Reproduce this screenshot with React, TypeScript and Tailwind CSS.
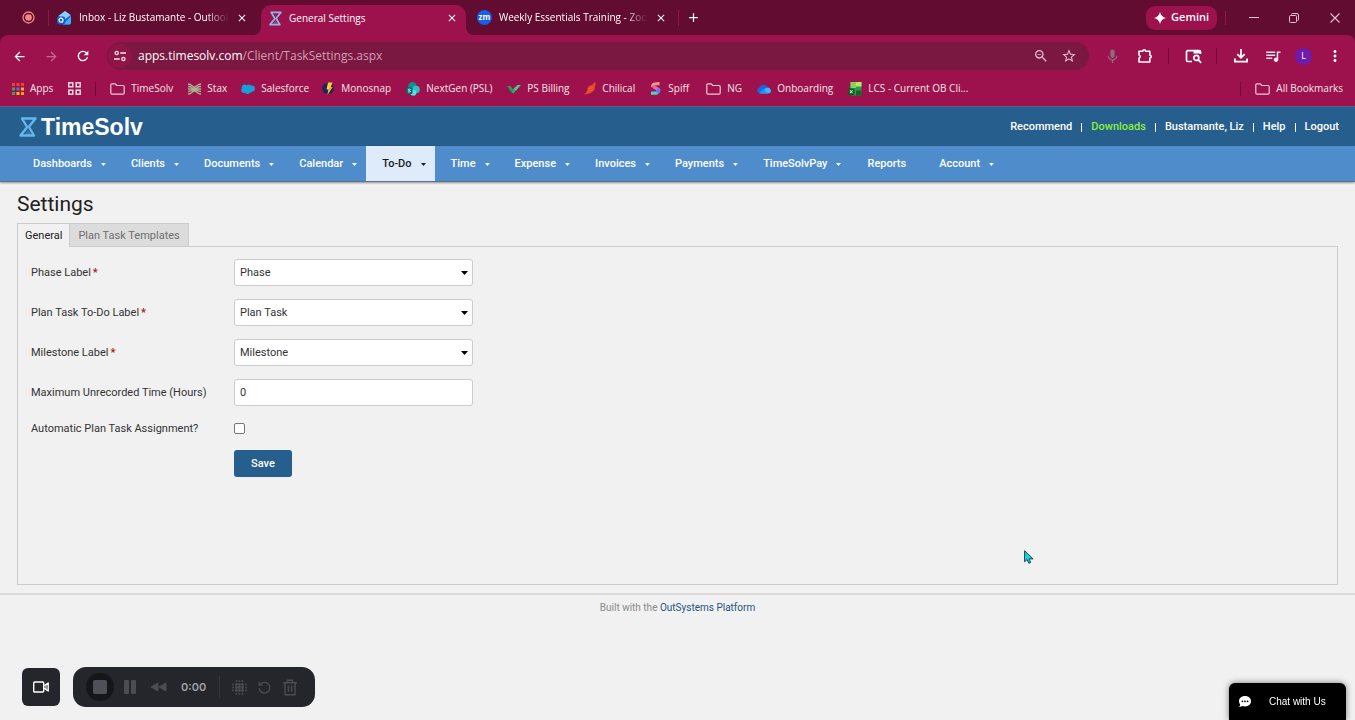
import React, { useState } from "react";
import {
  MdArrowBack,
  MdArrowForward,
  MdRefresh,
  MdZoomOut,
  MdStarOutline,
  MdMic,
  MdQueueMusic,
  MdMoreVert,
  MdClose,
  MdAdd,
} from "react-icons/md";

const chromeFont = "font-['Open_Sans','Noto_Sans',sans-serif]";

/* ---------- favicons and glyphs ---------- */

function OutlookIcon() {
  return (
    <svg width="15" height="15" viewBox="0 0 15 15">
      <path d="M1 6 8 1l6 4v8a1.500 1.500 0 0 1-1.500 1.500h-10L1 13z" fill="#1b62d6" />
      <path d="M1.500 6 8 1l5.500 4L7 10z" fill="#8fd0fb" />
      <path d="M14 6v7l-1.500 1.500H6L14 6z" fill="#34b4f4" />
      <rect x="0" y="6.500" width="8" height="7.500" rx="1.500" fill="#1459c4" />
      <circle cx="4" cy="10.200" r="2" fill="none" stroke="#fff" strokeWidth="1.200" />
    </svg>
  );
}

function Hourglass({ w, h, color }: { w: number; h: number; color: string }) {
  return (
    <svg width={w} height={h} viewBox="0 0 18 20" fill="none" stroke={color} strokeLinejoin="round">
      <path d="M3 1.500h13.500L10.500 9c-.5.700-.5 1.300 0 2l4.500 7.500H1.500L7.500 11c.5-.7.5-1.300 0-2z" strokeWidth="2.400" />
      <path d="M5.500 17.800 9 13l3.500 4.800z" strokeWidth="0" fill={color} fillOpacity="0.300" />
    </svg>
  );
}

function ZoomIcon() {
  return (
    <svg width="15" height="15" viewBox="0 0 15 15">
      <circle cx="7.500" cy="7.500" r="7.500" fill="#1560e8" />
      <text x="7.500" y="10" textAnchor="middle" fontSize="8" fontWeight="700" fontFamily="Open Sans, sans-serif" fill="#fff">
        zm
      </text>
    </svg>
  );
}

function AppsIcon() {
  const colors = ["#ea4335", "#ea4335", "#ea4335", "#34a853", "#5b6fe0", "#fbbc04", "#4a9b6b", "#fbbc04", "#f6a01a"];
  return (
    <svg width="12" height="12" viewBox="0 0 12 12">
      {colors.map((c, i) => (
        <rect key={i} x={(i % 3) * 4.500} y={Math.floor(i / 3) * 4.500} width="3" height="3" fill={c} />
      ))}
    </svg>
  );
}

function GridIcon() {
  return (
    <svg width="13" height="13" viewBox="0 0 13 13" fill="none" stroke="#f3dbe5" strokeWidth="1.500">
      <rect x=".8" y=".8" width="4" height="4" />
      <rect x="8.200" y=".8" width="4" height="4" />
      <rect x=".8" y="8.200" width="4" height="4" />
      <rect x="8.200" y="8.200" width="4" height="4" />
    </svg>
  );
}

function FolderIcon() {
  return (
    <svg width="15" height="12" viewBox="0 0 15 12" fill="none" stroke="#eccbd9" strokeWidth="1.200" strokeLinejoin="round">
      <path d="M.8 2A1.200 1.200 0 0 1 2 .8h3.200L6.800 2.500H13A1.200 1.200 0 0 1 14.200 3.700V10A1.200 1.200 0 0 1 13 11.200H2A1.200 1.200 0 0 1 .8 10z" />
    </svg>
  );
}

function StaxIcon() {
  return (
    <svg width="13" height="12" viewBox="0 0 13 12" fill="none" stroke="#a9b492" strokeWidth="1.300">
      <path d="M0 1c4 0 4 3 6.500 3S9 1 13 1M0 3.500c4 0 4 2 6.500 2s2.500-2 6.500-2M0 6h13M0 8.500c4 0 4-2 6.500-2s2.500 2 6.500 2M0 11c4 0 4-3 6.500-3S9 11 13 11" />
    </svg>
  );
}

function SalesforceIcon() {
  return (
    <svg width="14" height="10" viewBox="0 0 14 10" fill="#149fdc">
      <circle cx="3.700" cy="3.500" r="2.900" />
      <circle cx="7.800" cy="3" r="2.600" />
      <circle cx="11" cy="4.500" r="2.900" />
      <circle cx="3" cy="6.200" r="2.700" />
      <circle cx="6.500" cy="7" r="2.900" />
      <circle cx="9" cy="6" r="2.600" />
    </svg>
  );
}

function MonosnapIcon() {
  return (
    <svg width="13" height="13" viewBox="0 0 13 13">
      <circle cx="6" cy="6.500" r="5.800" fill="#1d2457" />
      <path d="M6 .5h4.500L8.800 5H10.500L5.500 12.800 6.500 7.500H4.500z" fill="#f9cf3c" />
      <path d="M8.800 5H10.500L5.500 12.800 6.500 7.500z" fill="#f2a72c" />
    </svg>
  );
}

function SharePointIcon() {
  return (
    <svg width="14" height="14" viewBox="0 0 14 14">
      <circle cx="6.500" cy="4.300" r="4.200" fill="#0d9094" />
      <circle cx="10" cy="7.500" r="3.800" fill="#2cc1c4" />
      <circle cx="7.300" cy="10.800" r="3" fill="#52dfe3" />
      <rect x="0" y="5.500" width="6.500" height="6.500" rx="1" fill="#05686c" />
      <path d="M4.600 7.500c-.8-.6-2.400-.5-2.400.3 0 .9 2.200.6 2.200 1.600 0 .9-1.700.9-2.500.2" stroke="#fff" strokeWidth=".9" fill="none" />
    </svg>
  );
}

function PsBillingIcon() {
  return (
    <svg width="14" height="10" viewBox="0 0 14 10">
      <path d="M0 2h3.500L6 5.500l-1.500 3z" fill="#1f9d5b" />
      <path d="M4.500 8.500 6 5.500 7.500 3.500l2.500 1.500L6.500 9.500z" fill="#27b369" />
      <path d="m7 4.500 3.500-3.500H14L9 6.500z" fill="#4cc98c" />
    </svg>
  );
}

function ChilicalIcon() {
  return (
    <svg width="13" height="13" viewBox="0 0 13 13">
      <path d="M0 12.500c3-.5 4-3 4.500-6C5 4.500 7 3 9 3l3-3 .8.800L12 4.500C12.500 9 7 12.500 0 12.500z" fill="#e5482d" />
      <path d="m5 7 5-1.500M4.500 9.500l5-1.500" stroke="#f2693a" strokeWidth=".6" />
    </svg>
  );
}

function SpiffIcon() {
  return (
    <svg width="12" height="13" viewBox="0 0 12 13">
      <path d="M9.500 0v3.200H5L1.500 5.500C.5 3 2 .5 5 .5z" fill="#f2a071" />
      <path d="M1.500 3.500 5 3.200l5.500 4-1.500 2.500L3 6.500z" fill="#e264b8" />
      <path d="M9 5.800c2.500 2 1.500 5.500-1 6.200l-2.500-2.700z" fill="#5f7bf0" />
      <path d="M1 9.500h5l2.500 2.500-2 .8H1z" fill="#49d4c3" />
    </svg>
  );
}

function OneDriveIcon() {
  return (
    <svg width="14" height="10" viewBox="0 0 14 10">
      <path d="M3 9.500a3 3 0 0 1-.6-5.900A4.500 4.500 0 0 1 10.500 3L6 9.500z" fill="#1668dc" />
      <path d="M4 9.500 8 4.500c3-2.500 6 0 6 2.500a2.600 2.600 0 0 1-2.500 2.500z" fill="#3fb5fb" />
      <path d="M2 9.300 6.500 4.500l4 5z" fill="#2a90f0" />
    </svg>
  );
}

function ExcelIcon() {
  return (
    <svg width="14" height="14" viewBox="0 0 14 14">
      <rect x="2.500" y="0" width="11" height="13.500" rx="1.200" fill="#2f9a45" />
      <rect x="2.500" y="0" width="5.500" height="6" fill="#8ad15a" />
      <rect x="8" y="0" width="5.500" height="4.500" fill="#b7e66a" />
      <rect x="8" y="8.500" width="5.500" height="5" fill="#17622f" />
      <rect x="0" y="6.500" width="6.500" height="6.500" rx="1" fill="#0d5a2b" />
      <path d="m2 8.200 2.500 3M4.500 8.200 2 11.200" stroke="#fff" strokeWidth="1" />
    </svg>
  );
}

function TuneIcon() {
  return (
    <svg width="14" height="14" viewBox="0 0 14 14" fill="none" stroke="#f6e3eb" strokeWidth="1.300">
      <circle cx="3.700" cy="4" r="1.600" />
      <path d="M7.200 4H13M1 10h5.800" />
      <circle cx="10.400" cy="10" r="1.600" />
    </svg>
  );
}

function ExtensionIcon() {
  return (
    <svg width="16" height="16" viewBox="0 0 16 16" fill="none" stroke="#fff" strokeWidth="1.600" strokeLinejoin="round">
      <path d="M2 3.200h3.800a1.400 1.400 0 0 1 2.800 0h4.200v4a1.400 1.400 0 0 1 0 2.800v4H2v-3.800a1.700 1.700 0 0 0 0-3.200z" />
    </svg>
  );
}

function DownloadIcon() {
  return (
    <svg width="16" height="16" viewBox="0 0 16 16" fill="none" stroke="#fff" strokeWidth="1.800">
      <path d="M8 1v8.500M4.300 6.200 8 9.800l3.700-3.600M1.900 10.500v3.200h12.200v-3.200" />
    </svg>
  );
}

function PanelSearchIcon() {
  return (
    <svg width="17" height="15" viewBox="0 0 17 15" fill="none" stroke="#fff" strokeWidth="1.700">
      <path d="M7 12.500H2.800A1.300 1.300 0 0 1 1.500 11.200V3A1.300 1.300 0 0 1 2.800 1.700h11.400A1.300 1.300 0 0 1 15.500 3v2" />
      <rect x="8.500" y="1" width="7" height="3.500" fill="#fff" stroke="none" />
      <circle cx="11.300" cy="8.900" r="2.500" />
      <path d="m13.200 10.800 3 3" />
    </svg>
  );
}

function Caret({ className }: { className: string }) {
  return (
    <svg width="5" height="3" viewBox="0 0 5 3" className={className}>
      <path d="M0 0h5L2.500 3z" fill="currentColor" />
    </svg>
  );
}

/* ---------- browser window ---------- */

function TabFlare({ side }: { side: "left" | "right" }) {
  return (
    <svg width="8" height="8" viewBox="0 0 8 8" className={side === "left" ? "absolute bottom-0 -left-2" : "absolute bottom-0 -right-2"}>
      <path d={side === "left" ? "M8 0v8H0a8 8 0 0 0 8-8z" : "M0 0v8h8a8 8 0 0 1-8-8z"} fill="#9d114c" />
    </svg>
  );
}

function TabStrip() {
  return (
    <div className="flex h-[35px] items-center text-[10px] text-white">
      <div className="flex w-[57px] items-center gap-[13px] pl-[22px]">
        <svg width="13" height="13" viewBox="0 0 13 13">
          <circle cx="6.500" cy="6.500" r="5.500" fill="none" stroke="#f08a80" strokeWidth="1.300" />
          <circle cx="6.500" cy="6.500" r="3.300" fill="#f08a80" />
        </svg>
        <span className="h-4 w-px bg-[#94174a]" />
      </div>
      <div className="flex w-[204px] items-center">
        <OutlookIcon />
        <span className="ml-[7px] w-[150px] overflow-hidden whitespace-nowrap [mask-image:linear-gradient(to_right,black_85%,transparent)]">
          Inbox - Liz Bustamante - Outlook
        </span>
        <button aria-label="Close tab" className="ml-[7px]">
          <MdClose size={12} />
        </button>
      </div>
      <div className="relative flex h-[30px] w-[205px] items-center self-end rounded-t-[10px] bg-[#9d114c] pb-1 pl-2">
        <TabFlare side="left" />
        <Hourglass w={13} h={15} color="#8bb7e8" />
        <span className="ml-[7px] w-[150px]">General Settings</span>
        <button aria-label="Close tab" className="ml-[7px]">
          <MdClose size={12} />
        </button>
        <TabFlare side="right" />
      </div>
      <div className="flex w-[213px] items-center pl-[11px]">
        <ZoomIcon />
        <span className="ml-[7px] w-[149px] overflow-hidden whitespace-nowrap [mask-image:linear-gradient(to_right,black_85%,transparent)]">
          Weekly Essentials Training - Zoom
        </span>
        <button aria-label="Close tab" className="ml-2">
          <MdClose size={12} />
        </button>
        <span className="ml-[11px] h-4 w-px bg-[#94174a]" />
      </div>
      <button aria-label="New tab" className="ml-[7px]">
        <MdAdd size={15} />
      </button>
      <div className="ml-auto flex items-center pr-[15px]">
        <button className="flex h-6 items-center gap-[5px] rounded-[9px] bg-[#9d114c] px-2 text-[11px] font-semibold">
          <svg width="12" height="12" viewBox="0 0 12 12">
            <path d="M6 0c.8 3.200 2.800 5.200 6 6-3.200.8-5.200 2.800-6 6-.8-3.200-2.800-5.200-6-6 3.200-.8 5.200-2.800 6-6z" fill="#fff" />
          </svg>
          Gemini
        </button>
        <span className="ml-2 h-[14px] w-px bg-[#94174a]" />
        <button aria-label="Minimize" className="ml-[23px]">
          <svg width="10" height="10" viewBox="0 0 10 10" stroke="#e3c3d0">
            <path d="M0 4.500h10" />
          </svg>
        </button>
        <button aria-label="Restore" className="ml-[30px]">
          <svg width="10" height="10" viewBox="0 0 10 10" fill="none" stroke="#e3c3d0">
            <rect x=".5" y="2.500" width="7" height="7" rx="1" />
            <path d="M2.500 1.500A1 1 0 0 1 3.500.5h4.500a1.500 1.500 0 0 1 1.500 1.500V6.500a1 1 0 0 1-1 1" />
          </svg>
        </button>
        <button aria-label="Close window" className="ml-[31px]">
          <svg width="10" height="10" viewBox="0 0 10 10" stroke="#e3c3d0" strokeWidth="1.100">
            <path d="m.5.500 9 9m0-9-9 9" />
          </svg>
        </button>
      </div>
    </div>
  );
}

function Toolbar() {
  return (
    <div className="flex h-[42px] items-center pr-[11px] pl-3 text-white">
      <button aria-label="Back">
        <MdArrowBack size={15} />
      </button>
      <button aria-label="Forward" className="ml-[17px] text-[#c76890]">
        <MdArrowForward size={15} />
      </button>
      <button aria-label="Reload" className="ml-4">
        <MdRefresh size={16} />
      </button>
      <div className="ml-4 flex h-7 flex-1 items-center rounded-full bg-[#7a1841] pr-3 pl-px">
        <button aria-label="Site information" className="flex size-6 items-center justify-center rounded-full bg-[#8f1548]">
          <TuneIcon />
        </button>
        <div className="ml-[6px] flex-1 text-[12px] text-[#d49cb3]">
          <span className="text-white">apps.timesolv.com</span>/Client/TaskSettings.aspx
        </div>
        <MdZoomOut size={16} className="text-[#e3bccb]" />
        <MdStarOutline size={16} className="ml-3 text-[#e3bccb]" />
      </div>
      <MdMic size={17} className="ml-[15px] text-[#8d6a7c]" />
      <span className="ml-4">
        <ExtensionIcon />
      </span>
      <span className="ml-[15px] h-4 w-px bg-[#6d0d36]" />
      <span className="ml-4">
        <PanelSearchIcon />
      </span>
      <span className="ml-[14px] h-4 w-px bg-[#6d0d36]" />
      <span className="ml-4">
        <DownloadIcon />
      </span>
      <MdQueueMusic size={18} className="ml-[15px] text-[#f6e3eb]" />
      <span className="ml-[13px] flex size-[17px] items-center justify-center rounded-full bg-[#6f1bab] text-[9px]">L</span>
      <MdMoreVert size={18} className="ml-[14px]" />
    </div>
  );
}

const bookmarks: { name: string; icon: React.ReactNode; width: string }[] = [
  { name: "TimeSolv", icon: <FolderIcon />, width: "w-[78px]" },
  { name: "Stax", icon: <StaxIcon />, width: "w-[53px]" },
  { name: "Salesforce", icon: <SalesforceIcon />, width: "w-[81px]" },
  { name: "Monosnap", icon: <MonosnapIcon />, width: "w-[84px]" },
  { name: "NextGen (PSL)", icon: <SharePointIcon />, width: "w-[101px]" },
  { name: "PS Billing", icon: <PsBillingIcon />, width: "w-[76px]" },
  { name: "Chilical", icon: <ChilicalIcon />, width: "w-[67px]" },
  { name: "Spiff", icon: <SpiffIcon />, width: "w-[56px]" },
  { name: "NG", icon: <FolderIcon />, width: "w-[51px]" },
  { name: "Onboarding", icon: <OneDriveIcon />, width: "w-[91px]" },
  { name: "LCS - Current OB Cli...", icon: <ExcelIcon />, width: "w-[130px]" },
];

function BookmarksBar() {
  return (
    <div className="flex h-[29px] items-center pr-3 pb-[6px] pl-3 text-[10px] whitespace-nowrap text-[#f8e8ee]">
      <a href="#apps" className="flex items-center gap-[6px]">
        <AppsIcon />
        Apps
      </a>
      <span className="ml-[15px]">
        <GridIcon />
      </span>
      <span className="mr-[14px] ml-[14px] h-[14px] w-px bg-[#6d0d36]" />
      {bookmarks.map((b) => (
        <a key={b.name} href="#bookmark" className={`flex items-center gap-[6px] ${b.width}`}>
          {b.icon}
          {b.name}
        </a>
      ))}
      <span className="ml-auto h-[14px] w-px bg-[#6d0d36]" />
      <a href="#all" className="ml-[14px] flex items-center gap-[6px]">
        <FolderIcon />
        All Bookmarks
      </a>
    </div>
  );
}

/* ---------- application ---------- */

function AppHeader() {
  const sep = <span className="h-[9px] w-px bg-white" />;
  return (
    <header className="flex h-10 items-center justify-between border-t border-[#5c5f8b] bg-[#265e8d] pr-4 pl-[19px] text-[11px] font-medium text-white">
      <a href="#home" className="flex items-center gap-1 pt-px font-['Liberation_Sans',Arial,sans-serif] text-[23px] leading-none font-bold">
        <Hourglass w={18} h={20} color="#63b8ec" />
        TimeSolv
      </a>
      <nav className="flex items-center gap-[9px] pt-[2px]">
        <a href="#recommend">Recommend</a>
        {sep}
        <a href="#downloads" className="text-[#8cf03c]">
          Downloads
        </a>
        {sep}
        <a href="#user">Bustamante, Liz</a>
        {sep}
        <a href="#help">Help</a>
        {sep}
        <a href="#logout">Logout</a>
      </nav>
    </header>
  );
}

const menu = [
  "Dashboards",
  "Clients",
  "Documents",
  "Calendar",
  "To-Do",
  "Time",
  "Expense",
  "Invoices",
  "Payments",
  "TimeSolvPay",
  "Reports",
  "Account",
];

function MainMenu() {
  return (
    <nav className="flex h-9 border-b border-[#5d7387] bg-[#4f8ccc] pl-[17px] text-[11px] font-medium text-white shadow-[0_1px_2px_rgba(0,0,0,0.4)]">
      {menu.map((item) => (
        <a
          key={item}
          href="#menu"
          className={
            item === "To-Do"
              ? "flex items-center bg-[#deebfb] pt-[2px] pr-[9px] pl-4 text-[#1c1c1c]"
              : item === "Reports"
                ? "flex items-center px-[17px] pt-[2px]"
                : "flex items-center pt-[2px] pr-[9px] pl-4"
          }
        >
          {item}
          {item !== "Reports" && <Caret className="ml-[9px]" />}
        </a>
      ))}
    </nav>
  );
}

const selects = [
  { id: "phase", label: "Phase Label", options: ["Phase", "Stage"] },
  { id: "plan-task", label: "Plan Task To-Do Label", options: ["Plan Task", "Task"] },
  { id: "milestone", label: "Milestone Label", options: ["Milestone", "Goal"] },
];

const fieldClass = "h-[27px] w-full appearance-none rounded-[3px] border border-[#ccc] bg-white px-[5px] text-[11px] text-[#333] outline-none";

function SettingsForm() {
  const [hours, setHours] = useState("0");
  return (
    <form
      className="grid min-h-[339px] grid-cols-[203px_239px] content-start gap-y-[13px] border border-[#ccc] px-[13px] pt-3 text-[11px] text-[#333]"
      onSubmit={(e) => e.preventDefault()}
    >
      {selects.map((s) => (
        <React.Fragment key={s.id}>
          <label htmlFor={s.id} className="flex items-center gap-[2px] pt-[2px]">
            {s.label}
            <span className="font-bold text-[#b01818]">*</span>
          </label>
          <div className="relative">
            <select id={s.id} className={`${fieldClass} pt-[2px]`}>
              {s.options.map((o) => (
                <option key={o}>{o}</option>
              ))}
            </select>
            <svg width="7" height="4" viewBox="0 0 7 4" className="pointer-events-none absolute top-3 right-[5px]">
              <path d="M0 0h7L3.500 4z" fill="#000" />
            </svg>
          </div>
        </React.Fragment>
      ))}
      <label htmlFor="hours" className="flex items-center pt-[2px]">
        Maximum Unrecorded Time (Hours)
      </label>
      <input id="hours" type="text" className={fieldClass} value={hours} onChange={(e) => setHours(e.target.value)} />
      <label htmlFor="auto" className="flex h-[18px] items-center pt-[2px]">
        Automatic Plan Task Assignment?
      </label>
      <div className="flex items-center">
        <input id="auto" type="checkbox" className="size-[11px] appearance-none rounded-[2px] border border-[#767676] bg-white checked:bg-[#265e8d]" />
      </div>
      <button type="submit" className="col-start-2 h-[27px] w-[58px] rounded-[3px] bg-[#265e8d] pt-[2px] font-medium text-white">
        Save
      </button>
    </form>
  );
}

function Recorder() {
  return (
    <div className="fixed bottom-[13px] left-[22px] flex items-center gap-[13px]">
      <button aria-label="Camera" className="flex size-[38px] items-center justify-center rounded-[6px] bg-[#25262c]">
        <svg width="16" height="12" viewBox="0 0 16 12" fill="none" stroke="#fff" strokeWidth="1.400" strokeLinejoin="round">
          <rect x=".7" y="1" width="10" height="10" rx="1" />
          <path d="M11 4.800 15.200 2v8L11 7.200" />
          <path d="M13 4v4" strokeWidth="1" />
        </svg>
      </button>
      <div className="flex h-10 w-[242px] items-center rounded-[13px] bg-[#25262c] pl-[13px] text-[#4b4c54]">
        <button aria-label="Stop" className="flex size-7 items-center justify-center rounded-full bg-[#15161a]">
          <span className="size-[14px] rounded-[2px] bg-[#4f5058]" />
        </button>
        <button aria-label="Pause" className="ml-[10px] flex gap-[2px]">
          <span className="h-[14px] w-[5px] rounded-[1px] bg-[#4b4c54]" />
          <span className="h-[14px] w-[5px] rounded-[1px] bg-[#4b4c54]" />
        </button>
        <button aria-label="Rewind" className="ml-[14px]">
          <svg width="17" height="10" viewBox="0 0 17 10" fill="currentColor" stroke="currentColor" strokeLinejoin="round">
            <path d="M8 1v8L1 5zM16 1v8L9 5z" />
          </svg>
        </button>
        <span className="ml-[14px] w-[38px] font-['Inter',sans-serif] text-[11px] font-semibold text-[#9fa0a6]">0:00</span>
        <span className="h-[22px] w-px bg-[#36373e]" />
        <button aria-label="Effects" className="ml-3">
          <svg width="15" height="15" viewBox="0 0 15 15" fill="currentColor">
            {[1, 4.500, 7.500, 10.500, 14].map((y, r) =>
              [1, 4.500, 7.500, 10.500, 14].map((x, c) => {
                const edge = r % 4 === 0 || c % 4 === 0;
                const corner = r % 4 === 0 && c % 4 === 0;
                return corner ? null : <circle key={`${r}-${c}`} cx={x} cy={y} r={edge ? 0.900 : 1.400} />;
              })
            )}
          </svg>
        </button>
        <button aria-label="Restart" className="ml-[11px]">
          <svg width="13" height="13" viewBox="0 0 13 13" fill="none" stroke="currentColor" strokeWidth="1.300">
            <path d="M2.200 3.500a5.300 5.300 0 1 1-1 3.500M1.200.8v3.400h3.400" />
          </svg>
        </button>
        <button aria-label="Delete" className="ml-3">
          <svg width="14" height="17" viewBox="0 0 14 17" fill="none" stroke="currentColor" strokeWidth="1.400">
            <path d="M0 3.700h14M4.500 3.500V1.200h5v2.300M2 3.700v12h10v-12M5.400 6.500v6.300M8.600 6.500v6.300" />
          </svg>
        </button>
      </div>
    </div>
  );
}

function ChatButton() {
  return (
    <button className="fixed right-[9px] bottom-0 flex h-[37px] w-[117px] items-center rounded-t-[6px] bg-black pl-[10px] font-['Liberation_Sans',Arial,sans-serif] text-[10px] text-white shadow-[0_0_6px_rgba(0,0,0,0.5)]">
      <svg width="12" height="11" viewBox="0 0 12 11">
        <path d="M6 0c3.400 0 6 2.200 6 5.200s-2.600 5.200-6 5.200c-.9 0-1.700-.1-2.400-.4L.3 11l.9-2.600A4.800 4.800 0 0 1 0 5.200C0 2.200 2.600 0 6 0z" fill="#fff" />
        <circle cx="3.400" cy="5.300" r=".9" />
        <circle cx="6" cy="5.300" r=".9" />
        <circle cx="8.600" cy="5.300" r=".9" />
      </svg>
      <span className="ml-[18px]">Chat with Us</span>
    </button>
  );
}

export default function App() {
  return (
    <div className="flex min-h-screen flex-col bg-[#f1f1f1] font-['Roboto',sans-serif]">
      <div className={`bg-[#620c31] ${chromeFont}`}>
        <TabStrip />
        <div className="rounded-t-lg bg-[#9d114c]">
          <Toolbar />
          <BookmarksBar />
        </div>
      </div>
      <AppHeader />
      <MainMenu />
      <main className="px-[17px] pt-2">
        <h1 className="text-[21px] leading-7 text-[#222]">Settings</h1>
        <div className="relative mt-[5px] -mb-px flex text-[11px]">
          <button className="h-6 border border-b-0 border-[#ccc] bg-[#f1f1f1] px-[7px] pt-px text-[#222]">General</button>
          <button className="h-6 border border-l-0 border-[#ccc] bg-[#dcdcdc] px-2 pt-[2px] text-[#6e6e6e]">Plan Task Templates</button>
        </div>
        <SettingsForm />
      </main>
      <footer className="mt-2 border-t-2 border-[#dadada] pt-[5px] text-center text-[10px] leading-4 text-[#8a8a8a]">
        Built with the{" "}
        <a href="#platform" className="text-[#1d5480]">
          OutSystems Platform
        </a>
      </footer>
      <svg width="10" height="14" viewBox="0 0 10 14" className="pointer-events-none absolute top-[550px] left-[1024px]">
        <path d="M.6.800v11l2.500-2.300 1.700 3.800 1.900-.9L5.100 8.900h4z" fill="#12d6e6" stroke="#12303a" strokeWidth=".9" />
      </svg>
      <Recorder />
      <ChatButton />
    </div>
  );
}
